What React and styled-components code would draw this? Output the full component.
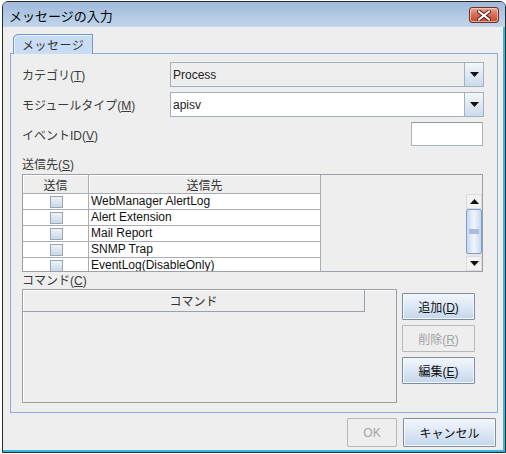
import React from 'react'
import styled, { createGlobalStyle } from 'styled-components'

const GlobalStyle = createGlobalStyle`
  html, body {
    margin: 0;
    padding: 0;
    background: #ffffff;
  }
  body {
    font-family: "Liberation Sans", "Noto Sans CJK JP", sans-serif;
    font-size: 12px;
    color: #222222;
  }
  * { box-sizing: border-box; }
`

const destinations = [
  'WebManager AlertLog',
  'Alert Extension',
  'Mail Report',
  'SNMP Trap',
  'EventLog(DisableOnly)',
]

const Mn = ({ children }) => <u>{children}</u>

const ArrowDown = () => (
  <svg width="9" height="5" viewBox="0 0 9 5">
    <polygon points="0,0 9,0 4.5,5" fill="#111" />
  </svg>
)

const ArrowUp = () => (
  <svg width="9" height="5" viewBox="0 0 9 5">
    <polygon points="0,5 9,5 4.5,0" fill="#111" />
  </svg>
)

const CloseGlyph = () => (
  <svg width="14" height="11" viewBox="0 0 14 11">
    <path d="M2 1.5 L12 9.5 M12 1.5 L2 9.5" stroke="#5a1a10" strokeWidth="4" strokeLinecap="square" />
    <path d="M2 1.5 L12 9.5 M12 1.5 L2 9.5" stroke="#ffffff" strokeWidth="2" strokeLinecap="square" />
  </svg>
)

export default function App() {
  return (
    <>
      <GlobalStyle />
      <Window>
        <TitleBar>
          <Title>メッセージの入力</Title>
          <CloseButton><CloseGlyph /></CloseButton>
        </TitleBar>
        <Body>
          <TabStrip>
            <Tab>メッセージ</Tab>
          </TabStrip>
          <Panel>
            <FormRow>
              <Label>カテゴリ(<Mn>T</Mn>)</Label>
              <Combo>
                <ComboValue>Process</ComboValue>
                <ComboArrow><ArrowDown /></ComboArrow>
              </Combo>
            </FormRow>
            <FormRow $mt={5}>
              <Label>モジュールタイプ(<Mn>M</Mn>)</Label>
              <Combo $editable>
                <ComboValue>apisv</ComboValue>
                <ComboArrow><ArrowDown /></ComboArrow>
              </Combo>
            </FormRow>
            <FormRow $mt={5} $h={24}>
              <Label>イベントID(<Mn>V</Mn>)</Label>
              <TextField />
            </FormRow>

            <SectionLabel $mt={12}>送信先(<Mn>S</Mn>)</SectionLabel>
            <TableFrame>
              <Columns>
                <HeaderRow>
                  <HeaderCell $w={66}>送信</HeaderCell>
                  <HeaderCell $last>送信先</HeaderCell>
                </HeaderRow>
                {destinations.map((d) => (
                  <BodyRow key={d}>
                    <CheckCell><CheckBox /></CheckCell>
                    <TextCell>{d}</TextCell>
                  </BodyRow>
                ))}
              </Columns>
              <Rest>
                <Corner />
                <ScrollBar>
                  <ScrollButton><ArrowUp /></ScrollButton>
                  <Thumb><Grip /></Thumb>
                  <Track />
                  <ScrollButton><ArrowDown /></ScrollButton>
                </ScrollBar>
              </Rest>
            </TableFrame>

            <SectionLabel $mt={2}>コマンド(<Mn>C</Mn>)</SectionLabel>
            <CommandArea>
              <CommandFrame>
                <CommandHeader>
                  <CommandHeaderCell>コマンド</CommandHeaderCell>
                </CommandHeader>
              </CommandFrame>
              <SideButtons>
                <Button>追加(<Mn>D</Mn>)</Button>
                <Button disabled>削除(<Mn>R</Mn>)</Button>
                <Button>編集(<Mn>E</Mn>)</Button>
              </SideButtons>
            </CommandArea>
          </Panel>
          <Footer>
            <Button $w={50} $h={29} disabled>OK</Button>
            <Button $w={93} $h={29}>キャンセル</Button>
          </Footer>
        </Body>
      </Window>
    </>
  )
}

const Window = styled.div`
  margin: 1px 0 0 2px;
  width: 504px;
  height: 452px;
  border: 1px solid #2b2b2b;
  border-radius: 6px 6px 0 0;
  background: #eeeeee;
  display: flex;
  flex-direction: column;
  overflow: hidden;
`

const TitleBar = styled.div`
  height: 25px;
  flex: none;
  display: flex;
  align-items: center;
  justify-content: space-between;
  padding: 0 6px 0 6px;
  background: linear-gradient(#9fbadb, #c2d6ec);
`

const Title = styled.div`
  font-family: "Noto Sans CJK JP", sans-serif;
  font-size: 13px;
  color: #000000;
  margin-top: 1px;
`

const CloseButton = styled.div`
  width: 30px;
  height: 16px;
  margin-top: 1px;
  border: 1px solid #7a2c1e;
  border-radius: 3px;
  background: linear-gradient(#e9a99a, #d66a52 50%, #c24d36);
  box-shadow: inset 0 0 0 1px rgba(255, 220, 210, 0.6);
  display: flex;
  align-items: center;
  justify-content: center;
`

const Body = styled.div`
  flex: 1;
  display: flex;
  flex-direction: column;
  padding: 7px 5px 3px 7px;
  border-right: 2px solid #38b4e4;
  border-bottom: 2px solid #38b4e4;
`

const TabStrip = styled.div`
  height: 19px;
  display: flex;
  align-items: flex-end;
  padding-left: 3px;
`

const Tab = styled.div`
  position: relative;
  z-index: 1;
  width: 80px;
  height: 20px;
  margin-bottom: -1px;
  border: 1px solid #7595cc;
  border-bottom: none;
  border-top-left-radius: 6px 5px;
  border-top-right-radius: 1px;
  background: #c8dcf3;
  box-shadow: inset 1px 1px 0 #eaf2fc;
  font-family: "Noto Sans CJK JP", sans-serif;
  font-size: 12px;
  letter-spacing: 0.5px;
  white-space: nowrap;
  color: #333;
  padding: 1px 0 0 8px;
  line-height: 17px;
`

const Panel = styled.div`
  height: 360px;
  border: 1px solid #8eaad8;
  display: flex;
  flex-direction: column;
  padding: 8px 13px 0 11px;
`

const FormRow = styled.div`
  display: grid;
  grid-template-columns: 148px 1fr;
  align-items: center;
  height: ${(p) => p.$h || 25}px;
  margin-top: ${(p) => p.$mt || 0}px;
`

const Label = styled.div`
  color: #3a3a3a;
  font-size: 12px;
`

const Combo = styled.div`
  height: 25px;
  display: flex;
  border: 1px solid #a2b0c2;
  background: ${(p) => (p.$editable ? '#ffffff' : '#eeeeee')};
`

const ComboValue = styled.div`
  flex: 1;
  display: flex;
  align-items: center;
  padding-left: 2px;
  font-size: 12px;
  color: #222;
`

const ComboArrow = styled.div`
  width: 19px;
  display: flex;
  align-items: center;
  justify-content: center;
  border-left: 1px solid #a2b0c2;
  background: linear-gradient(#f4f7fb, #cbdaea);
`

const TextField = styled.div`
  justify-self: end;
  width: 72px;
  height: 24px;
  margin-right: 1px;
  background: #ffffff;
  border: 1px solid #a9b3bd;
  border-top-color: #8f99a3;
`

const SectionLabel = styled.div`
  height: ${(p) => (p.$mt === 12 ? 16 : 15)}px;
  margin-top: ${(p) => p.$mt}px;
  line-height: 15px;
  color: #3a3a3a;
  font-size: 12px;
`

const TableFrame = styled.div`
  height: 98px;
  margin-right: 1px;
  border: 1px solid #9aa1a8;
  display: flex;
  overflow: hidden;
`

const Columns = styled.div`
  width: 298px;
  border-right: 1px solid #a9aeb4;
  display: flex;
  flex-direction: column;
  overflow: hidden;
`

const HeaderRow = styled.div`
  height: 19px;
  flex: none;
  display: flex;
  border-bottom: 1px solid #a9aeb4;
  background: #eeeeee;
`

const HeaderCell = styled.div`
  width: ${(p) => (p.$w ? `${p.$w}px` : 'auto')};
  flex: ${(p) => (p.$w ? 'none' : 1)};
  border-right: ${(p) => (p.$last ? 'none' : '1px solid #a9aeb4')};
  box-shadow: inset 1px 1px 0 #ffffff;
  display: flex;
  align-items: center;
  justify-content: center;
  font-family: "Noto Sans CJK JP", sans-serif;
  font-size: 12px;
  color: #333;
`

const BodyRow = styled.div`
  height: 16px;
  flex: none;
  display: flex;
  background: #ffffff;
  border-bottom: 1px solid #a9aeb4;
`

const CheckCell = styled.div`
  width: 66px;
  border-right: 1px solid #a9aeb4;
  display: flex;
  justify-content: center;
  align-items: center;
`

const CheckBox = styled.div`
  width: 13px;
  height: 12px;
  margin-left: 1px;
  border: 1px solid #98a6b6;
  background: linear-gradient(#eef3f9, #cad8e8);
`

const TextCell = styled.div`
  flex: 1;
  padding-left: 2px;
  line-height: 15px;
  font-size: 12px;
  color: #111;
  white-space: nowrap;
`

const Rest = styled.div`
  flex: 1;
  display: flex;
  flex-direction: column;
  align-items: flex-end;
`

const Corner = styled.div`
  height: 19px;
  flex: none;
`

const ScrollBar = styled.div`
  width: 16px;
  flex: 1;
  display: flex;
  flex-direction: column;
  background: #e6e6e6;
`

const ScrollButton = styled.div`
  height: 15px;
  flex: none;
  display: flex;
  align-items: center;
  justify-content: center;
  background: #f2f2f2;
  border: 1px solid #dcdcdc;
`

const Thumb = styled.div`
  height: 45px;
  flex: none;
  border: 1px solid #7e9ed2;
  border-radius: 2px;
  background: linear-gradient(90deg, #c7d8ef, #f2f6fc 50%, #c7d8ef);
  display: flex;
  align-items: center;
  justify-content: center;
`

const Grip = styled.div`
  width: 10px;
  height: 5px;
  background: #a9bde0;
`

const Track = styled.div`
  flex: 1;
`

const CommandArea = styled.div`
  height: 114px;
  display: flex;
  gap: 5px;
`

const CommandFrame = styled.div`
  width: 375px;
  border: 1px solid #9aa1a8;
  box-shadow: inset 1px 1px 0 #ffffff;
  display: flex;
  flex-direction: column;
`

const CommandHeader = styled.div`
  height: 22px;
  display: flex;
`

const CommandHeaderCell = styled.div`
  width: 342px;
  border-right: 1px solid #9aa1a8;
  border-bottom: 1px solid #9aa1a8;
  display: flex;
  align-items: center;
  justify-content: center;
  font-family: "Noto Sans CJK JP", sans-serif;
  font-size: 12px;
  color: #333;
`

const SideButtons = styled.div`
  display: flex;
  flex-direction: column;
  gap: 5px;
  padding-top: 4px;
`

const Button = styled.button`
  width: ${(p) => p.$w || 73}px;
  height: ${(p) => p.$h || 27}px;
  padding: 0;
  font-family: "Liberation Sans", "Noto Sans CJK JP", sans-serif;
  font-size: 12px;
  color: #111;
  border: 1px solid #7f8da3;
  border-radius: 1px;
  background: linear-gradient(#f3f7fc, #c4d7ee);
  box-shadow: inset 0 0 0 1px #f4f8fd;

  &:disabled {
    color: #a3a3a3;
    border-color: #b9b9b9;
    background: #eeeeee;
    box-shadow: none;
  }
`

const Footer = styled.div`
  height: 29px;
  margin-top: 5px;
  display: flex;
  justify-content: flex-end;
  gap: 6px;
  padding-right: 2px;
`
